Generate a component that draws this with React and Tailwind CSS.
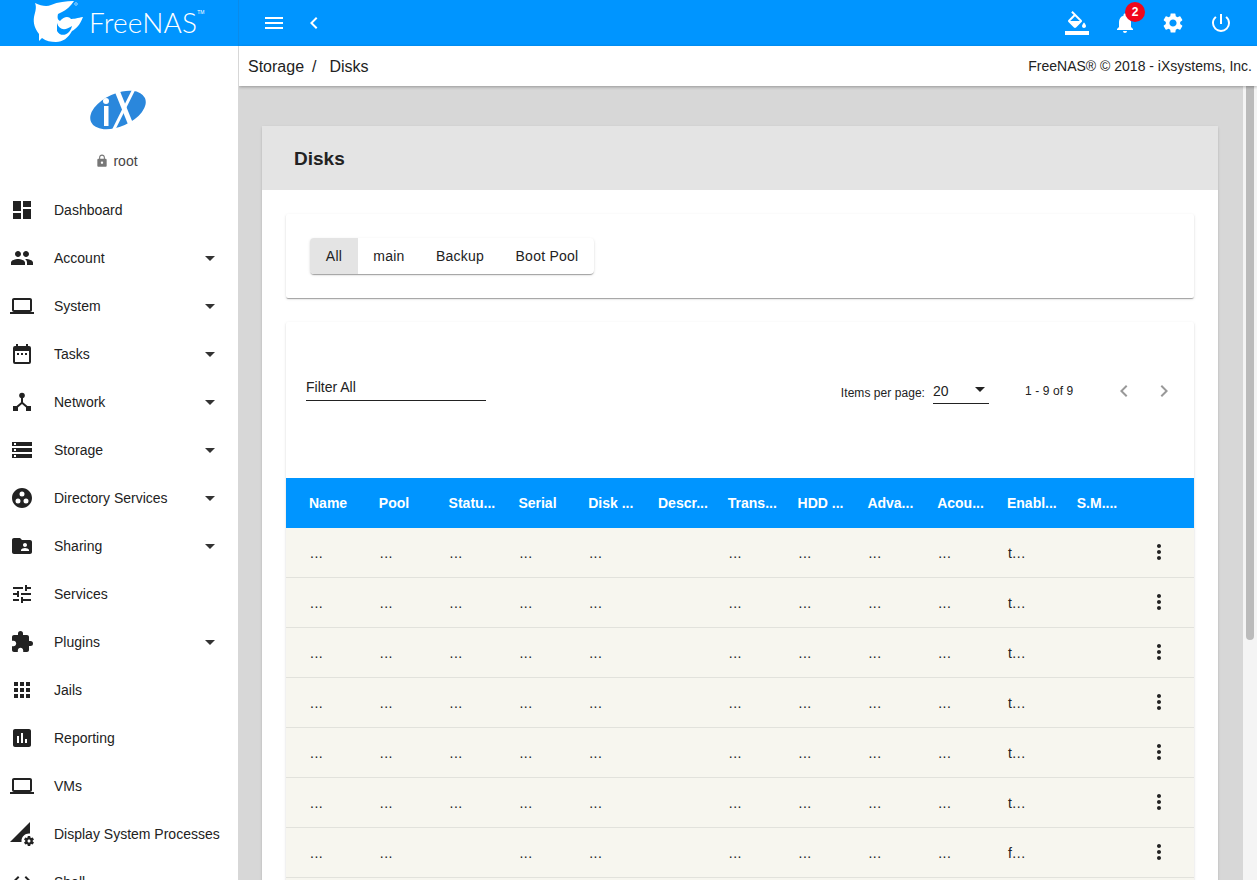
import React from 'react';
import {
  MdDashboard, MdPeople, MdLaptop, MdStorage, MdGroupWork, MdFolderShared, MdTune, MdExtension, MdApps,
  MdAssessment, MdPermDataSetting, MdCode, MdArrowDropDown, MdMenu, MdChevronLeft, MdChevronRight,
  MdNotifications, MdSettings, MdPowerSettingsNew, MdMoreVert, MdLock,
} from 'react-icons/md';

// calendar with the row of dots, the md set has no exact one
function TasksIcon(props) {
  return (
    <svg viewBox="0 0 24 24" fill="currentColor" {...props}>
      <path d="M19 4h-1V2h-2v2H8V2H6v2H5a2 2 0 0 0-2 2v14a2 2 0 0 0 2 2h14a2 2 0 0 0 2-2V6a2 2 0 0 0-2-2zm0 16H5V9h14v11z" />
      <rect x="7" y="11" width="2" height="2" />
      <rect x="11" y="11" width="2" height="2" />
      <rect x="15" y="11" width="2" height="2" />
    </svg>
  );
}

function NetworkIcon(props) {
  return (
    <svg viewBox="0 0 24 24" fill="currentColor" {...props}>
      <circle cx="12" cy="5.5" r="2.8" />
      <path d="M11 7h2v5.2l5 4.3-1.3 1.5L12 14l-4.7 4L6 16.5l5-4.3z" />
      <rect x="3" y="16" width="5" height="5" />
      <rect x="16" y="16" width="5" height="5" />
    </svg>
  );
}

function PaintIcon(props) {
  return (
    <svg viewBox="0 0 24 24" fill="currentColor" {...props}>
      <path d="M16.56 8.94 7.62 0 6.21 1.41l2.38 2.38-5.15 5.15a1.49 1.49 0 0 0 0 2.12l5.5 5.5c.29.29.68.44 1.06.44s.77-.15 1.06-.44l5.5-5.5c.59-.58.59-1.53 0-2.12zM5.21 10 10 5.21 14.79 10H5.21zM19 11.5s-2 2.17-2 3.5c0 1.1.9 2 2 2s2-.9 2-2c0-1.33-2-3.5-2-3.5z" />
      <rect x="0" y="20" width="24" height="4" />
    </svg>
  );
}

function SharkLogo() {
  return (
    <svg viewBox="0 0 52 44" className="w-[52px] h-[44px] text-white" fill="currentColor">
      <path d="M2 2 C8 5 14 6 18 4 C25 1 33 0 41 0 C38 5 33 9 29 11 L25 13 C24 17 25 19 27 20 C31 15 36 15 38 18 C40 18 45 17 50 16 C47 24 43 28 39 30 C35 37 30 41 23 41 C18 41 13 40 9 37 L6 40 L6 33 C2 28 0 22 1 16 C2 11 4 7 2 2 Z" />
      <path d="M24 22 C26 29 32 30 39 25 C37 34 28 37 24 30 Z" fill="#0095ff" />
      <circle cx="43" cy="3" r="1.3" fill="none" stroke="#cde9ff" strokeWidth="0.7" />
    </svg>
  );
}

function IxLogo() {
  return (
    <svg viewBox="0 0 58 44" className="w-[58px] h-[44px]">
      <ellipse cx="28" cy="22" rx="29.5" ry="16.5" transform="rotate(-24 28 22)" fill="#2a87dc" />
      <circle cx="16" cy="13" r="3" fill="#fff" />
      <rect x="14" y="18" width="4.5" height="20" fill="#fff" />
      <line x1="26" y1="0" x2="43" y2="42" stroke="#fff" strokeWidth="5" />
      <line x1="44" y1="1" x2="23" y2="43" stroke="#fff" strokeWidth="3" />
    </svg>
  );
}

const navItems = [
  { label: 'Dashboard', icon: MdDashboard },
  { label: 'Account', icon: MdPeople, arrow: true },
  { label: 'System', icon: MdLaptop, arrow: true },
  { label: 'Tasks', icon: TasksIcon, arrow: true },
  { label: 'Network', icon: NetworkIcon, arrow: true },
  { label: 'Storage', icon: MdStorage, arrow: true },
  { label: 'Directory Services', icon: MdGroupWork, arrow: true },
  { label: 'Sharing', icon: MdFolderShared, arrow: true },
  { label: 'Services', icon: MdTune },
  { label: 'Plugins', icon: MdExtension, arrow: true },
  { label: 'Jails', icon: MdApps },
  { label: 'Reporting', icon: MdAssessment },
  { label: 'VMs', icon: MdLaptop },
  { label: 'Display System Processes', icon: MdPermDataSetting },
  { label: 'Shell', icon: MdCode },
];

const columns = ['Name', 'Pool', 'Statu...', 'Serial', 'Disk ...', 'Descr...', 'Trans...', 'HDD ...', 'Adva...', 'Acou...', 'Enabl...', 'S.M....'];

const rows = [
  ['...', '...', '...', '...', '...', '', '...', '...', '...', '...', 't...', ''],
  ['...', '...', '...', '...', '...', '', '...', '...', '...', '...', 't...', ''],
  ['...', '...', '...', '...', '...', '', '...', '...', '...', '...', 't...', ''],
  ['...', '...', '...', '...', '...', '', '...', '...', '...', '...', 't...', ''],
  ['...', '...', '...', '...', '...', '', '...', '...', '...', '...', 't...', ''],
  ['...', '...', '...', '...', '...', '', '...', '...', '...', '...', 't...', ''],
  ['...', '...', '', '...', '...', '', '...', '...', '...', '...', 'f...', ''],
  ['...', '...', '...', '...', '...', '', '...', '...', '...', '...', 't...', ''],
];

const cardShadow = 'shadow-[0_2px_1px_-1px_rgba(0,0,0,0.2),0_1px_1px_0_rgba(0,0,0,0.14),0_1px_3px_0_rgba(0,0,0,0.12)]';

export default function App() {
  return (
    <div className="h-[880px] w-[1257px] overflow-hidden flex flex-col bg-white text-[#222] text-sm font-['Liberation_Sans',Arial,sans-serif]">
      {/* top bar */}
      <header className="h-[46px] shrink-0 flex bg-[#0095ff] text-white">
        <div className="w-[239px] shrink-0 border-r border-[#0a8bea] flex items-center pl-[33px]">
          <SharkLogo />
          <span className="ml-[4px] -mt-[2px] text-[28px] leading-none font-light font-['Lato',sans-serif] tracking-[0.2px]">FreeNAS</span>
          <span className="text-[5px] self-start mt-[9px]">TM</span>
        </div>
        <div className="flex-1 flex items-center pl-[23px] pr-[24px]">
          <MdMenu size={24} className="mr-[16px]" />
          <MdChevronLeft size={24} />
          <div className="ml-auto flex items-center gap-[24px]">
            <PaintIcon className="w-6 h-6" />
            <div className="relative">
              <MdNotifications size={24} />
              <span className="absolute -top-[9px] left-[12px] w-5 h-5 rounded-full bg-[#f0071c] text-white text-xs font-bold flex items-center justify-center">2</span>
            </div>
            <MdSettings size={24} />
            <MdPowerSettingsNew size={24} />
          </div>
        </div>
      </header>

      <div className="flex-1 flex min-h-0">
        {/* sidebar */}
        <aside className="relative z-20 w-[239px] shrink-0 bg-white border-r border-[#d7d7d7] overflow-hidden">
          <div className="h-[140px] flex flex-col items-center pt-[42px]">
            <IxLogo />
            <div className="mt-[19px] -ml-[5px] flex items-center text-sm text-[#444]">
              <MdLock size={14} className="mr-[4px] text-[#777]" />
              root
            </div>
          </div>
          {navItems.map((item) => {
            const Icon = item.icon;
            return (
              <div key={item.label} className="h-12 flex items-center pl-[10px] pr-[16px]">
                <Icon className="w-6 h-6 text-[#222] shrink-0" />
                <span className="ml-5 whitespace-nowrap">{item.label}</span>
                {item.arrow && <MdArrowDropDown size={24} className="ml-auto text-[#333]" />}
              </div>
            );
          })}
        </aside>

        <div className="flex-1 flex flex-col min-w-0">
          {/* breadcrumb */}
          <div className="relative z-10 h-10 shrink-0 bg-white flex items-center pl-[9px] pr-[5px] shadow-[0_1px_3px_rgba(0,0,0,0.3)]">
            <span className="text-base mt-[2px]">Storage</span>
            <span className="text-base mt-[2px] ml-[8px]">/</span>
            <span className="text-base mt-[2px] ml-[13px]">Disks</span>
            <span className="ml-auto">FreeNAS® © 2018 - iXsystems, Inc.</span>
          </div>

          <div className="flex-1 flex min-h-0">
            <main className="flex-1 min-w-0 bg-[#d7d7d7] pt-10 pl-[23px] pr-[25px] overflow-hidden">
              <section className={`bg-white rounded-t-[2px] ${cardShadow}`}>
                <div className="h-16 bg-[#e4e4e4] flex items-center pl-8">
                  <h1 className="text-[19px] font-bold mt-[2px]">Disks</h1>
                </div>
                <div className="p-6">
                  <div className={`h-[84px] bg-white rounded-[2px] flex items-center px-6 ${cardShadow}`}>
                    <div className={`flex h-9 bg-white rounded-[4px] overflow-hidden tracking-[0.25px] ${cardShadow}`}>
                      <button className="w-12 bg-[#e4e4e4]">All</button>
                      <button className="w-[62px]">main</button>
                      <button className="w-20">Backup</button>
                      <button className="w-[94px]">Boot Pool</button>
                    </div>
                  </div>

                  <div className={`mt-6 bg-white rounded-[2px] ${cardShadow}`}>
                    <div className="h-[156px] flex items-start pl-5 pt-[55px]">
                      <div className="w-[180px] h-6 border-b border-[#222] leading-5">Filter All</div>
                      <div className="ml-auto flex items-start pr-[18px] text-xs">
                        <span className="mt-[8px] tracking-[0.05px]">Items per page:</span>
                        <div className="ml-2 w-14 h-[27px] border-b border-[#222] flex items-center pt-[2px] text-sm relative">
                          20
                          <MdArrowDropDown size={24} className="absolute -right-[3px] top-0" />
                        </div>
                        <span className="ml-9 mt-[6px] w-[64px] tracking-[0.1px]">1 - 9 of 9</span>
                        <div className="ml-[23px] mt-[2px] flex gap-4 text-[#999]">
                          <MdChevronLeft size={24} />
                          <MdChevronRight size={24} />
                        </div>
                      </div>
                    </div>

                    <div className="h-[50px] bg-[#0095ff] text-white font-bold grid grid-cols-[repeat(12,69.8px)_1fr] items-center pl-[23px]">
                      {columns.map((c) => (
                        <span key={c} className="whitespace-nowrap">{c}</span>
                      ))}
                    </div>
                    {rows.map((row, i) => (
                      <div key={i} className="h-[50px] bg-[#f7f6ef] border-b border-[#e2e2dc] grid grid-cols-[repeat(12,69.8px)_1fr] items-center pl-6">
                        {row.map((cell, j) => (
                          <span key={j} className="tracking-[0.5px]">{cell}</span>
                        ))}
                        <MdMoreVert size={24} className="-ml-[1px] -mt-[2px]" />
                      </div>
                    ))}
                  </div>
                </div>
              </section>
            </main>
            {/* scrollbar */}
            <div className="w-[14px] shrink-0 bg-[#f4f4f4] pl-[3px]">
              <div className="w-2 h-[554px] rounded-b-full bg-[#bbbbbb]"></div>
            </div>
          </div>
        </div>
      </div>
    </div>
  );
}
